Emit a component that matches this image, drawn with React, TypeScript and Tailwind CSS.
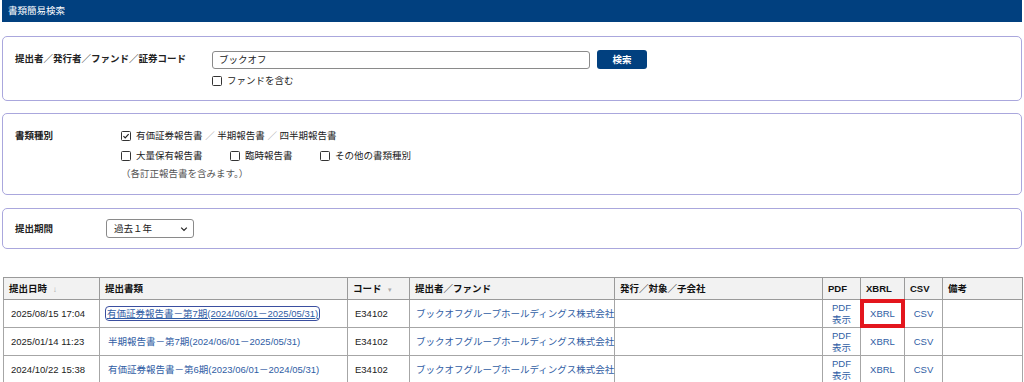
import React from "react";

type Row = {
  date: string;
  doc: string;
  code: string;
  filer: string;
  focused?: boolean;
  marked?: boolean;
};

const rows: Row[] = [
  { date: "2025/08/15 17:04", doc: "有価証券報告書－第7期(2024/06/01－2025/05/31)", code: "E34102", filer: "ブックオフグループホールディングス株式会社", focused: true, marked: true },
  { date: "2025/01/14 11:23", doc: "半期報告書－第7期(2024/06/01－2025/05/31)", code: "E34102", filer: "ブックオフグループホールディングス株式会社" },
  { date: "2024/10/22 15:38", doc: "有価証券報告書－第6期(2023/06/01－2024/05/31)", code: "E34102", filer: "ブックオフグループホールディングス株式会社" },
];

function CheckBox({ checked }: { checked?: boolean }) {
  return (
    <span className="inline-flex w-[10px] h-[10px] shrink-0 items-center justify-center rounded-[1.5px] border-[1.5px] border-[#333] bg-white">
      {checked && (
        <svg viewBox="0 0 10 10" className="w-[8px] h-[8px]">
          <path d="M1.8 5.2 L4 7.3 L8.3 2.6" fill="none" stroke="#222" strokeWidth="1.5" />
        </svg>
      )}
    </span>
  );
}

const App: React.FC = () => {
  const link = "text-[#2f5da4]";
  const th = "border border-[#9a9a9a] bg-[#f2f2f2] px-[5px] text-left font-bold text-[#111] h-[22px]";
  const td = "border border-[#a6a6a6] h-[28px] align-middle";

  return (
    <div
      className="w-[1024px] h-[382px] overflow-hidden bg-white px-[2px] text-[9.5px] leading-[1.2] text-[#222]"
      style={{ fontFamily: '"Liberation Sans", "Noto Sans CJK JP", sans-serif' }}
    >
      {/* Title bar */}
      <div className="flex h-[22px] w-[1020px] items-center bg-[#01407f] pl-[6px] text-white">書類簡易検索</div>

      {/* Filer search */}
      <div className="mt-[14px] flex rounded-[5px] border border-[#aaa7dd] pb-[13px] pl-[12px] pt-[13px]">
        <div className="flex h-[18px] w-[197px] items-center font-bold">提出者／発行者／ファンド／証券コード</div>
        <div className="flex flex-col">
          <div className="flex items-center">
            <div className="flex h-[18px] w-[378px] items-center rounded-[3px] border border-[#8a8a8a] pl-[6px] text-[#222]">ブックオフ</div>
            <button className="ml-[7px] h-[19px] w-[50px] rounded-[3px] bg-[#01407f] font-bold text-white">検索</button>
          </div>
          <label className="mt-[6px] flex h-[12px] items-center gap-[5px]">
            <CheckBox />
            <span>ファンドを含む</span>
          </label>
        </div>
      </div>

      {/* Document types */}
      <div className="mt-[12px] flex rounded-[5px] border border-[#aaa7dd] pb-[13px] pl-[12px] pt-[15px]">
        <div className="flex h-[14px] w-[106px] items-center font-bold">書類種別</div>
        <div className="flex flex-col">
          <div className="flex h-[14px] items-center gap-[5px]">
            <CheckBox checked />
            <span>
              有価証券報告書 <span className="text-[#999]">／</span> 半期報告書 <span className="text-[#999]">／</span> 四半期報告書
            </span>
          </div>
          <div className="mt-[6px] flex h-[14px] items-center">
            <div className="flex w-[109px] items-center gap-[5px]">
              <CheckBox />
              <span>大量保有報告書</span>
            </div>
            <div className="flex w-[90px] items-center gap-[5px]">
              <CheckBox />
              <span>臨時報告書</span>
            </div>
            <div className="flex items-center gap-[5px]">
              <CheckBox />
              <span>その他の書類種別</span>
            </div>
          </div>
          <div className="mt-[4px] flex h-[14px] items-center text-[#555]">（各訂正報告書を含みます。）</div>
        </div>
      </div>

      {/* Period */}
      <div className="mt-[13px] flex items-center rounded-[5px] border border-[#aaa7dd] pb-[10px] pl-[12px] pt-[10px]">
        <div className="w-[91px] font-bold">提出期間</div>
        <div className="flex h-[19px] w-[88px] items-center justify-between rounded-[3px] border border-[#8a8a8a] pl-[7px] pr-[5px]">
          <span>過去１年</span>
          <svg viewBox="0 0 10 10" className="w-[8px] h-[8px]">
            <path d="M1.5 3.2 L5 6.7 L8.5 3.2" fill="none" stroke="#222" strokeWidth="1.5" />
          </svg>
        </div>
      </div>

      {/* Results */}
      <table className="ml-[1px] mt-[28px] w-[1019px] table-fixed border-collapse">
        <colgroup>
          <col className="w-[96px]" />
          <col className="w-[248px]" />
          <col className="w-[62px]" />
          <col className="w-[205px]" />
          <col className="w-[208px]" />
          <col className="w-[38px]" />
          <col className="w-[44px]" />
          <col className="w-[38px]" />
          <col className="w-[80px]" />
        </colgroup>
        <thead>
          <tr>
            <th className={th}>
              提出日時 <span className="ml-[3px] text-[8px] font-normal text-[#aaa]">↓</span>
            </th>
            <th className={th}>提出書類</th>
            <th className={th}>
              コード <span className="ml-[4px] text-[7px] font-normal text-[#aaa]">▾</span>
            </th>
            <th className={th}>提出者／ファンド</th>
            <th className={th}>発行／対象／子会社</th>
            <th className={th}>PDF</th>
            <th className={th}>XBRL</th>
            <th className={th}>CSV</th>
            <th className={th}>備考</th>
          </tr>
        </thead>
        <tbody>
          {rows.map((r) => (
            <tr key={r.date}>
              <td className={`${td} pl-[7px]`}>{r.date}</td>
              <td className={`${td} pl-[6px]`}>
                {r.focused ? (
                  <span className={`${link} rounded-[3px] px-[1px] py-[1px] underline outline outline-[1.5px] outline-[#3b4fa0]`}>{r.doc}</span>
                ) : (
                  <span className={`${link} px-[2px]`}>{r.doc}</span>
                )}
              </td>
              <td className={`${td} pl-[7px]`}>{r.code}</td>
              <td className={`${td} pl-[6px] ${link} whitespace-nowrap`}>{r.filer}</td>
              <td className={td}></td>
              <td className={`${td} text-center leading-[12px] ${link}`}>
                PDF
                <br />
                表示
              </td>
              <td className={`${td} relative text-center ${link}`}>
                XBRL
                {r.marked && <span className="absolute inset-[-1px] border-4 border-[#e3161d]" />}
              </td>
              <td className={`${td} text-center ${link}`}>CSV</td>
              <td className={td}></td>
            </tr>
          ))}
        </tbody>
      </table>
    </div>
  );
};

export default App;
